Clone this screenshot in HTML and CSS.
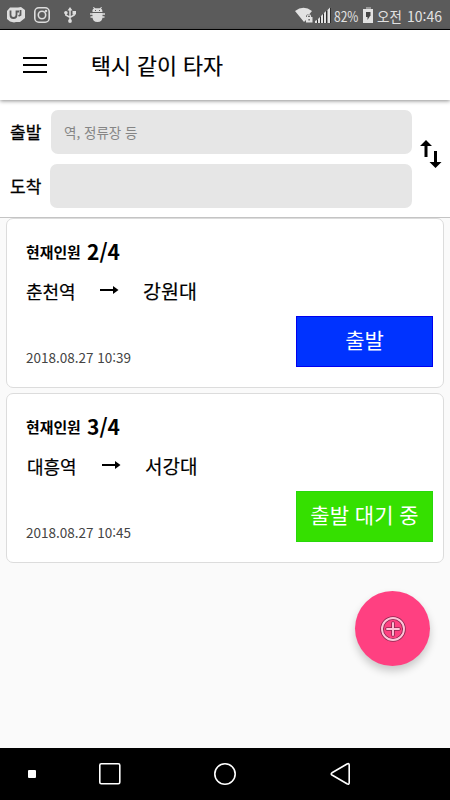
FILE: index.html
```html
<!DOCTYPE html>
<html lang="ko">
<head>
    <meta charset="UTF-8">
    <meta name="viewport" content="width=device-width, initial-scale=1.0">
    <title>택시 같이 타자</title>
    <link rel="stylesheet" href="styles.css">
</head>
<body>
    <div class="status-bar">
        <div class="status-left">
            <svg width="20" height="16" viewBox="0 0 20 16">
                <path fill="#ddd" d="M4 0.5H12L15 0L19 3V11L14 15H10L8 15.5L4 14.5L1 12V4Z"/>
                <path fill="none" stroke="#5b5b5b" stroke-width="1.8" d="M4.5 3.5V8Q4.5 11 7.5 11Q10.5 11 10.5 8V4.5H13M14.5 3V8L12.5 9"/>
            </svg>
            <svg class="insta" width="16" height="16" viewBox="0 0 16 16" fill="none" stroke="#ddd" stroke-width="1.6">
                <rect x="0.8" y="0.8" width="14.4" height="14.4" rx="4"/>
                <circle cx="8" cy="8" r="3.7"/>
                <circle cx="12" cy="4" r="0.5"/>
            </svg>
            <svg class="usb" width="12" height="16" viewBox="0 0 12 16">
                <path fill="none" stroke="#ddd" stroke-width="1.5" d="M6 2V14M1.8 5V8L6 10.5L10.2 8V5"/>
                <path fill="#ddd" d="M6 0L8.5 3.5H3.5ZM8.5 4H12V7.5H8.5Z"/>
                <circle cx="1.9" cy="5.8" r="1.8" fill="#ddd"/>
                <circle cx="6" cy="14" r="1.9" fill="#ddd"/>
            </svg>
            <svg class="bug" width="15" height="16" viewBox="0 0 15 16">
                <path fill="#ddd" d="M2.5 5V3Q3 1.5 4 1.5L3 0.5L3.7 0L5.3 1.2H9.7L11.3 0L12 0.5L11 1.5Q12.5 2 12.5 5ZM2.5 6H12.5V10Q12.5 15 7.5 15Q2.5 15 2.5 10Z"/>
                <path stroke="#ddd" stroke-width="1.4" d="M0 7H15M0.5 10H14.5"/>
                <path fill="#5b5b5b" d="M5 3H6V4H5ZM9 3H10V4H9Z"/>
            </svg>
        </div>
        <div class="status-right">
            <svg width="18" height="16" viewBox="0 0 18 16">
                <path fill="#e2e2e2" d="M0 4Q8.5 -2.5 17 4L14.5 7Q11 7 11 10V13L9 15Z"/>
                <path fill="none" stroke="#e2e2e2" stroke-width="1.2" d="M12.5 11V9.3Q12.5 7.8 14 7.8Q15.5 7.8 15.5 9.3V11"/>
                <rect x="11" y="10" width="6.5" height="5.5" fill="#e2e2e2"/>
                <rect x="13.5" y="12" width="1.2" height="1.5" fill="#444"/>
            </svg>
            <svg class="signal" width="16" height="16" viewBox="0 0 16 16">
                <path fill="#2d2d2d" d="M2 13H3V16H2ZM5 10H6V16H5ZM8 7H9V16H8ZM11 4H12.5V16H11ZM15 1H16V16H15Z"/>
                <path fill="#e2e2e2" d="M0 14L2 13V16H0ZM3 12L5 10V16H3ZM6 9L8 7V16H6ZM9 6L11 4V16H9ZM12.5 3L15 0.5V16H12.5Z"/>
            </svg>
            <span class="percent">82%</span>
            <svg class="battery" width="10" height="16" viewBox="0 0 10 16">
                <path fill="#999" d="M3 0H8V2H3Z"/>
                <path fill="#e2e2e2" d="M0 2H10V16H0Z"/>
                <path fill="#444" d="M3 5H7.5V9H7L4.5 13V10H3Z"/>
            </svg>
            <span class="ampm">오전</span>
            <span class="clock">10:46</span>
        </div>
    </div>

    <header class="toolbar">
        <div class="menu-icon"><span></span><span></span><span></span></div>
        <h1>택시 같이 타자</h1>
    </header>

    <section class="search">
        <div class="fields">
            <div class="field">
                <label>출발</label>
                <div class="input">역, 정류장 등</div>
            </div>
            <div class="field">
                <label>도착</label>
                <div class="input wide"></div>
            </div>
        </div>
        <svg class="swap" width="22" height="28" viewBox="0 0 22 28">
            <path d="M6 0L12 6H7.5V17H4.5V6H0ZM14 11H17V22H21.5L15.5 28L9.5 22H14Z"/>
        </svg>
    </section>

    <main>
        <div class="card">
            <div class="people"><b>현재인원</b><strong>2/4</strong></div>
            <div class="route">
                <span class="from">춘천역</span>
                <svg class="arrow" width="19" height="10" viewBox="0 0 19 10"><path d="M0 3H13V0L18.5 4L13 8V5H0Z"/></svg>
                <span class="to">강원대</span>
            </div>
            <div class="bottom">
                <time>2018.08.27 10:39</time>
                <div class="state start">출발</div>
            </div>
        </div>
        <div class="card">
            <div class="people"><b>현재인원</b><strong>3/4</strong></div>
            <div class="route second">
                <span class="from">대흥역</span>
                <svg class="arrow" width="19" height="10" viewBox="0 0 19 10"><path d="M0 3H13V0L18.5 4L13 8V5H0Z"/></svg>
                <span class="to">서강대</span>
            </div>
            <div class="bottom">
                <time>2018.08.27 10:45</time>
                <div class="state waiting">출발 대기 중</div>
            </div>
        </div>
    </main>

    <div class="fab">
        <svg width="26" height="26" viewBox="0 0 26 26" fill="none">
            <circle cx="13" cy="13" r="11" stroke="#8c2850" stroke-width="3.6"/>
            <circle cx="13" cy="13" r="11" stroke="#ffc4d8" stroke-width="1.9"/>
            <path stroke="#8c2850" stroke-width="3.6" stroke-linecap="round" d="M13 7V19M7 13H19"/>
            <path stroke="#ffc4d8" stroke-width="1.9" stroke-linecap="round" d="M13 7V19M7 13H19"/>
        </svg>
    </div>

    <nav class="nav-bar">
        <svg width="450" height="52" viewBox="0 0 450 52" fill="none" stroke="#fff" stroke-width="1.6">
            <rect x="28" y="22" width="8" height="8" rx="1" fill="#fff" stroke="none"/>
            <rect x="99.8" y="15.8" width="20" height="20" rx="1.5"/>
            <circle cx="225" cy="26" r="10.2"/>
            <path stroke-linejoin="round" d="M332 24.8L347 16Q349.2 15 349.2 17V34.5Q349.2 37 347 35.8L332 27Q330.5 26 332 24.8Z"/>
        </svg>
    </nav>
</body>
</html>
```

FILE: styles.css
```css
* {
    box-sizing: border-box;
}
body {
    margin: 0;
    height: 800px;
    display: flex;
    flex-direction: column;
    overflow: hidden;
    background: #fafafa;
    color: #000;
    font-family: "Noto Sans CJK KR", sans-serif;
}
svg {
    display: block;
    flex-shrink: 0;
}
.status-bar {
    height: 30px;
    flex-shrink: 0;
    display: flex;
    justify-content: space-between;
    padding: 7px 8px 0 6px;
    background: #5b5b5b;
    border-bottom: 1px solid #000;
    color: #e2e2e2;
    line-height: 18px;
    white-space: nowrap;
}
.status-left, .status-right {
    display: flex;
    align-items: flex-start;
}
.insta {
    margin-left: 8px;
}
.usb {
    margin-left: 14px;
}
.bug {
    margin-left: 14px;
}
.signal {
    margin-left: 2px;
}
.percent {
    width: 25px;
    margin-left: 3px;
    font-size: 12px;
    transform: scaleY(1.2);
}
.battery {
    margin-left: 4px;
}
.ampm {
    width: 25px;
    margin-left: 4px;
    font-size: 13.5px;
}
.clock {
    width: 35px;
    margin-left: 5px;
    font-size: 14px;
}
.toolbar {
    height: 70px;
    flex-shrink: 0;
    display: flex;
    align-items: center;
    padding-left: 23px;
    background: #fff;
    box-shadow: 0 1px 4px rgba(0, 0, 0, 0.45);
    z-index: 1;
}
.menu-icon {
    width: 24px;
    height: 16px;
    display: flex;
    flex-direction: column;
    justify-content: space-between;
}
.menu-icon span {
    height: 2px;
    background: #000;
}
h1 {
    margin: 0 0 0 44px;
    font-size: 21.7px;
    line-height: 30px;
    font-weight: 400;
    -webkit-text-stroke: 0.2px #000;
}
.search {
    height: 118px;
    flex-shrink: 0;
    display: flex;
    padding: 10px 8px 0 10px;
    background: #fff;
    border-bottom: 1px solid #c4c4c4;
}
.fields {
    width: 403px;
    display: flex;
    flex-direction: column;
    gap: 10px;
}
.field {
    height: 44px;
    display: flex;
    align-items: center;
    justify-content: space-between;
}
label {
    font-size: 17px;
    line-height: 24px;
    font-weight: 400;
    -webkit-text-stroke: 0.3px #000;
}
.input {
    width: 361px;
    height: 44px;
    padding-left: 13px;
    border-radius: 7px;
    background: #e6e6e6;
    color: #858585;
    font-size: 13.5px;
    line-height: 45px;
}
.wide {
    width: 362px;
}
.swap {
    margin: 30px 0 0 8px;
}
main {
    flex: 1;
    display: flex;
    flex-direction: column;
    gap: 5px;
    padding: 0 6px;
}
.card {
    height: 170px;
    padding: 18px 10px 0 19px;
    border: 1px solid #dcdcdc;
    border-radius: 7px;
    background: #fff;
}
.people {
    display: flex;
    align-items: center;
    height: 28px;
}
.people b {
    width: 61px;
    font-size: 14.9px;
}
.people strong {
    font-size: 21px;
}
.route {
    height: 30px;
    margin-top: 11px;
    display: flex;
    align-items: center;
    line-height: 30px;
    -webkit-text-stroke: 0.2px #000;
}
.from {
    width: 74px;
    font-size: 18px;
}
.to {
    margin-left: 24px;
    font-size: 19.5px;
}
.second .from {
    width: 76px;
    padding-left: 1px;
}
.second .to {
    font-size: 19px;
}
.bottom {
    display: flex;
    justify-content: space-between;
    margin-top: 10px;
}
time {
    margin-top: 31px;
    color: #444;
    font-size: 13.5px;
    line-height: 20px;
}
.state {
    width: 137px;
    height: 51px;
    color: #fff;
    font-size: 21px;
    line-height: 45px;
    text-align: center;
}
.start {
    background: #0033ff;
    border: 1px solid #0000f0;
}
.waiting {
    background: #35e000;
    border: 1px solid #28d80a;
}
.fab {
    position: absolute;
    left: 355px;
    top: 591px;
    width: 75px;
    height: 75px;
    display: flex;
    align-items: center;
    justify-content: center;
    border-radius: 50%;
    background: #ff4081;
    box-shadow: 0 5px 9px rgba(0, 0, 0, 0.2);
}
.nav-bar {
    height: 52px;
    flex-shrink: 0;
    background: #000;
}
```
